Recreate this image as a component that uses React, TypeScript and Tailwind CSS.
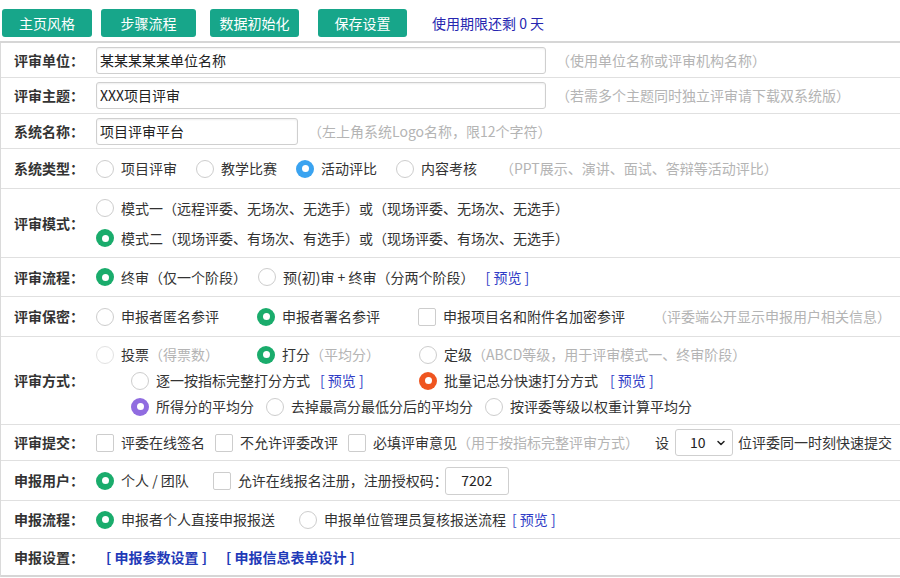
import type { ReactNode } from "react";
import { ChevronDown } from "lucide-react";

type Tone = "green" | "blue" | "orange" | "purple";

const toneClass: Record<Tone, string> = {
  green: "bg-[#1aac6c]",
  blue: "bg-[#3aa3f0]",
  orange: "bg-[#ef5520]",
  purple: "bg-[#906ce0]",
};

function Radio({ on, tone = "green", faint }: { on?: boolean; tone?: Tone; faint?: boolean }) {
  if (on) {
    return (
      <span className={`flex h-[18px] w-[18px] shrink-0 items-center justify-center rounded-full ${toneClass[tone]}`}>
        <span className="h-[7px] w-[7px] rounded-full bg-white" />
      </span>
    );
  }
  return (
    <span
      className={`h-[18px] w-[18px] shrink-0 rounded-full border bg-white ${
        faint ? "border-[#e2e2e2]" : "border-[#cdcdcd]"
      }`}
    />
  );
}

function Check() {
  return <span className="h-[18px] w-[18px] shrink-0 rounded-[2px] border border-[#cdcdcd] bg-white" />;
}

function Opt({ children, className = "" }: { children: ReactNode; className?: string }) {
  return <div className={`flex items-center gap-[7px] whitespace-nowrap ${className}`}>{children}</div>;
}

function Hint({ children, className = "" }: { children: ReactNode; className?: string }) {
  return <span className={`whitespace-nowrap text-[#b4b4b4] ${className}`}>{children}</span>;
}

function Preview({ className = "" }: { className?: string }) {
  return <span className={`whitespace-nowrap text-[#2f3cc6] ${className}`}>[ 预览 ]</span>;
}

function Row({ label, h, children, last }: { label: string; h: string; children: ReactNode; last?: boolean }) {
  return (
    <div className={`flex items-center ${h} ${last ? "border-b-2 border-[#d6d6d6]" : "border-b border-[#e0e0e0]"}`}>
      <div className="w-[95px] shrink-0 pl-[13px] font-bold text-[#333]">{label}</div>
      <div className="min-w-0 flex-1">{children}</div>
    </div>
  );
}

function Field({ value, w }: { value: string; w: string }) {
  return (
    <div
      className={`flex h-[27px] items-center rounded-[3px] border border-[#cfcfcf] pl-[3px] text-[#222] shadow-[inset_0_1px_2px_rgba(0,0,0,0.07)] ${w}`}
    >
      {value}
    </div>
  );
}

export default function App() {
  return (
    <div className="h-[578px] w-[900px] overflow-hidden bg-white text-[14px] text-[#333] font-['Noto_Sans_CJK_SC',sans-serif]">
      {/* toolbar */}
      <div className="flex h-[43px] items-start border-b-2 border-[#d6d6d6] pt-[9px]">
        <button className="ml-[2px] h-[28px] w-[90px] rounded-[3px] bg-[#17a68a] text-white">主页风格</button>
        <button className="ml-[9px] h-[28px] w-[95px] rounded-[3px] bg-[#17a68a] text-white">步骤流程</button>
        <button className="ml-[14px] h-[28px] w-[89px] rounded-[3px] bg-[#17a68a] text-white">数据初始化</button>
        <button className="ml-[19px] h-[28px] w-[89px] rounded-[3px] bg-[#17a68a] text-white">保存设置</button>
        <span className="ml-[25px] flex h-[28px] items-center text-[#2626b0]">使用期限还剩 0 天</span>
      </div>

      <div className="border-l border-[#dadada]">
        <Row label="评审单位：" h="h-[35px]">
          <div className="flex items-center">
            <Field value="某某某某某单位名称" w="w-[450px]" />
            <Hint className="ml-[10px]">（使用单位名称或评审机构名称）</Hint>
          </div>
        </Row>

        <Row label="评审主题：" h="h-[36px]">
          <div className="flex items-center">
            <Field value="XXX项目评审" w="w-[450px]" />
            <Hint className="ml-[10px]">（若需多个主题同时独立评审请下载双系统版）</Hint>
          </div>
        </Row>

        <Row label="系统名称：" h="h-[35px]">
          <div className="flex items-center">
            <Field value="项目评审平台" w="w-[202px]" />
            <Hint className="ml-[10px]">（左上角系统Logo名称，限12个字符）</Hint>
          </div>
        </Row>

        <Row label="系统类型：" h="h-[40px]">
          <div className="flex items-center gap-[19px]">
            <Opt><Radio />项目评审</Opt>
            <Opt><Radio />教学比赛</Opt>
            <Opt><Radio on tone="blue" />活动评比</Opt>
            <Opt><Radio />内容考核</Opt>
            <Hint className="ml-[4px]">（PPT展示、演讲、面试、答辩等活动评比）</Hint>
          </div>
        </Row>

        <Row label="评审模式：" h="h-[69px]">
          <div className="flex flex-col">
            <Opt className="h-[30px]"><Radio />模式一（远程评委、无场次、无选手）或（现场评委、无场次、无选手）</Opt>
            <Opt className="h-[30px]"><Radio on />模式二（现场评委、有场次、有选手）或（现场评委、有场次、无选手）</Opt>
          </div>
        </Row>

        <Row label="评审流程：" h="h-[39px]">
          <div className="flex items-center gap-[11px]">
            <Opt><Radio on />终审（仅一个阶段）</Opt>
            <Opt><Radio />预(初)审 + 终审（分两个阶段）</Opt>
            <Preview />
          </div>
        </Row>

        <Row label="评审保密：" h="h-[40px]">
          <div className="flex items-center gap-[38px]">
            <Opt><Radio />申报者匿名参评</Opt>
            <Opt><Radio on />申报者署名参评</Opt>
            <Opt><Check />申报项目名和附件名加密参评</Opt>
            <Hint className="-ml-[10px]">（评委端公开显示申报用户相关信息）</Hint>
          </div>
        </Row>

        <Row label="评审方式：" h="h-[88px]">
          <div className="flex flex-col">
            <div className="flex h-[26px] items-center">
              <Opt className="w-[161px]"><Radio faint /><span>投票<span className="text-[#b4b4b4]">（得票数）</span></span></Opt>
              <Opt className="w-[162px]"><Radio on /><span>打分<span className="text-[#b4b4b4]">（平均分）</span></span></Opt>
              <Opt><Radio /><span>定级<span className="text-[#b4b4b4]">（ABCD等级，用于评审模式一、终审阶段）</span></span></Opt>
            </div>
            <div className="flex h-[26px] items-center pl-[35px]">
              <div className="flex w-[288px] items-center gap-[10px]">
                <Opt><Radio />逐一按指标完整打分方式</Opt>
                <Preview />
              </div>
              <div className="flex items-center gap-[12px]">
                <Opt><Radio on tone="orange" />批量记总分快速打分方式</Opt>
                <Preview />
              </div>
            </div>
            <div className="flex h-[26px] items-center gap-[12px] pl-[35px]">
              <Opt><Radio on tone="purple" />所得分的平均分</Opt>
              <Opt><Radio />去掉最高分最低分后的平均分</Opt>
              <Opt><Radio />按评委等级以权重计算平均分</Opt>
            </div>
          </div>
        </Row>

        <Row label="评审提交：" h="h-[36px]">
          <div className="flex items-center gap-[10px]">
            <Opt><Check />评委在线签名</Opt>
            <Opt><Check />不允许评委改评</Opt>
            <Opt>
              <Check />
              <span>必填评审意见<span className="text-[#b4b4b4]">（用于按指标完整评审方式）</span></span>
            </Opt>
            <span className="ml-[6px]">设</span>
            <div className="-ml-[4px] flex h-[27px] w-[58px] items-center justify-between rounded-[3px] border border-[#cfcfcf] pl-[14px] pr-[5px] text-[#222]">
              <span>10</span>
              <ChevronDown className="h-[12px] w-[12px]" strokeWidth={3} />
            </div>
            <span className="-ml-[5px] whitespace-nowrap">位评委同一时刻快速提交</span>
          </div>
        </Row>

        <Row label="申报用户：" h="h-[40px]">
          <div className="flex items-center gap-[24px]">
            <Opt><Radio on />个人 / 团队</Opt>
            <div className="flex items-center">
              <Opt><Check />允许在线报名注册，注册授权码：</Opt>
              <div className="-ml-[3px] flex h-[28px] w-[64px] items-center justify-center rounded-[3px] border border-[#cfcfcf] text-[#222]">
                7202
              </div>
            </div>
          </div>
        </Row>

        <Row label="申报流程：" h="h-[38px]">
          <div className="flex items-center gap-[24px]">
            <Opt><Radio on />申报者个人直接申报报送</Opt>
            <div className="flex items-center gap-[6px]">
              <Opt><Radio />申报单位管理员复核报送流程</Opt>
              <Preview />
            </div>
          </div>
        </Row>

        <Row label="申报设置：" h="h-[38px]" last>
          <div className="flex items-center gap-[19px] pl-[10px] font-bold text-[#1f3ab8]">
            <span>[ 申报参数设置 ]</span>
            <span>[ 申报信息表单设计 ]</span>
          </div>
        </Row>
      </div>
    </div>
  );
}
